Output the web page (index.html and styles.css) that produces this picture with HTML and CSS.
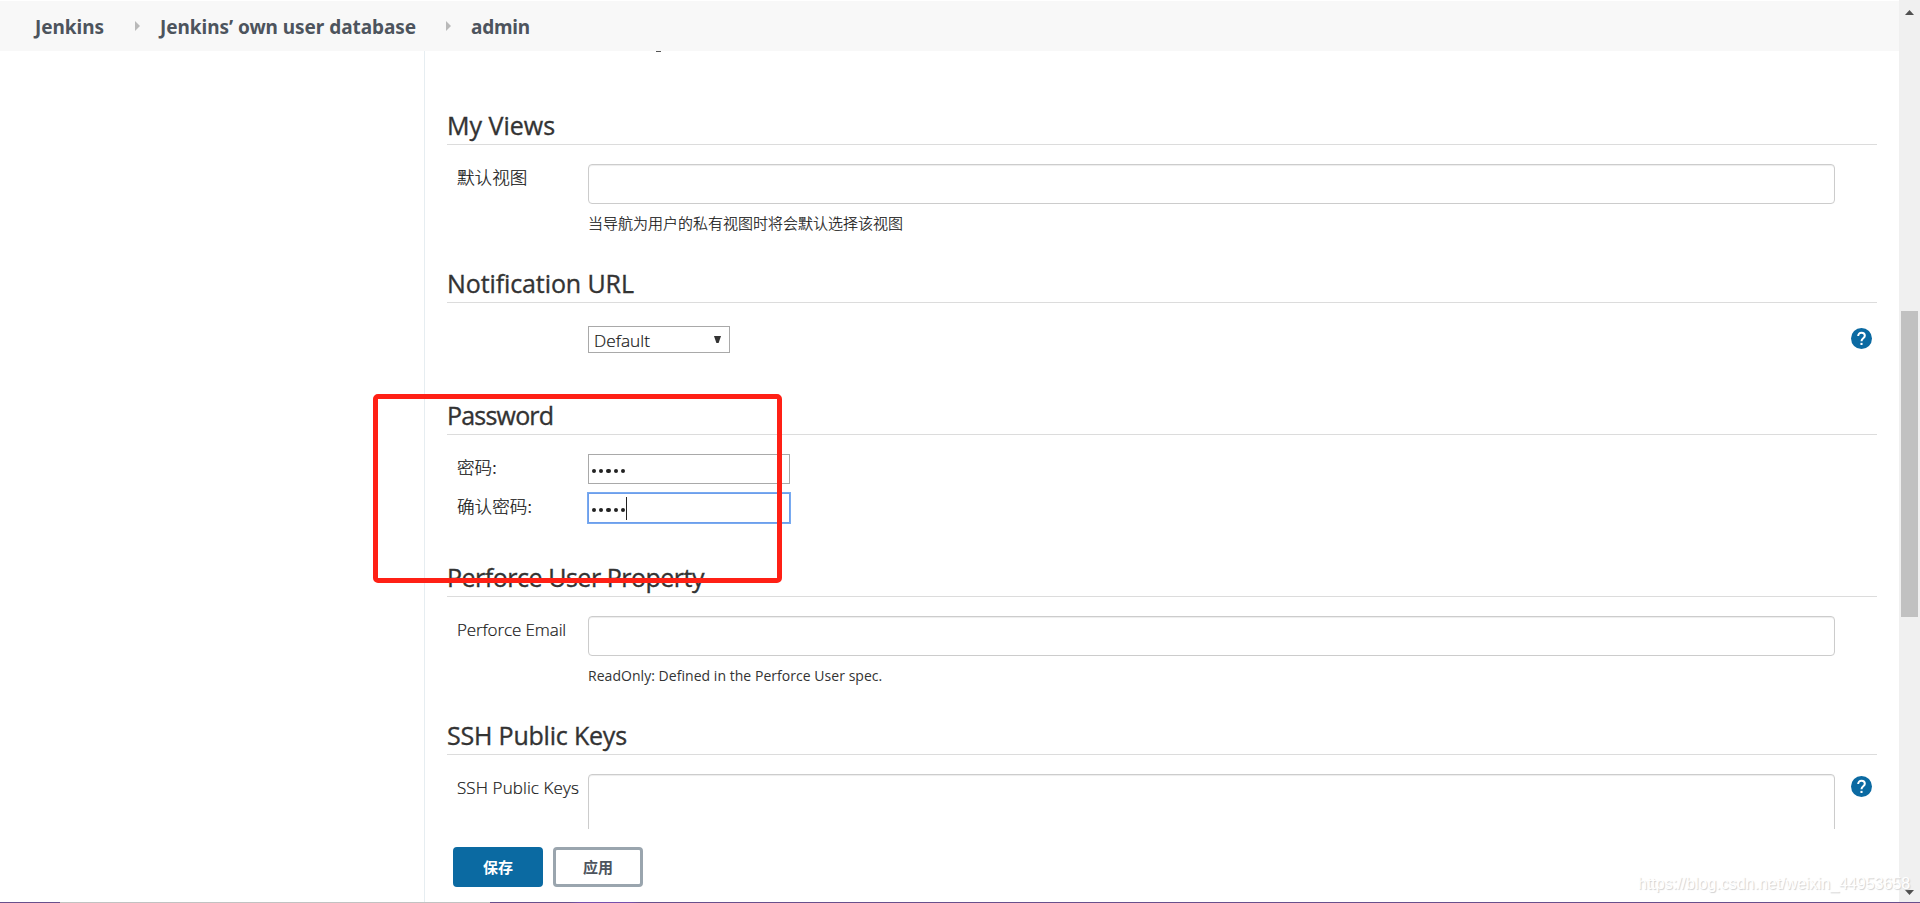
FILE: index.html
```html
<!DOCTYPE html>
<html lang="zh-CN">
<head>
<meta charset="utf-8">
<title>admin [Jenkins]</title>
<link rel="stylesheet" href="styles.css">
</head>
<body>
<div class="window">
  <div class="page">
    <nav class="crumbs">
      <span class="crumb c1">Jenkins</span><i class="sep s1"></i>
      <span class="crumb c2">Jenkins’ own user database</span><i class="sep s2"></i>
      <span class="crumb c3">admin</span>
    </nav>
    <div class="columns">
      <aside class="side"></aside>
      <main class="main">
        <div class="scroll">
          <div class="remnant"><i></i></div>
          <h2 class="title"><span class="t1">My Views</span></h2>
          <div class="body tall">
            <div class="row"><label class="label zh">默认视图</label>
              <div class="field"><div class="input"></div><p class="hint zh-hint">当导航为用户的私有视图时将会默认选择该视图</p></div></div>
          </div>
          <h2 class="title"><span class="t2">Notification URL</span></h2>
          <div class="body notify">
            <div class="row"><label class="label"></label>
              <div class="field"><div class="select"><span>Default</span><svg width="7" height="7" viewBox="0 0 7 7"><path d="M0 0h7L4.6 7H2.4z"/></svg></div></div>
              <svg class="help" viewBox="0 0 24 24"><circle cx="12" cy="12" r="12"/><path class="q" d="M8.2 9.2C8.2 6.9 9.8 5.4 12 5.4s3.8 1.4 3.8 3.5c0 2.8-3.8 2.9-3.8 6.1"/><path class="dot" d="M10.8 17h2.4v2.4h-2.4z"/></svg></div>
          </div>
          <h2 class="title"><span class="t3">Password</span></h2>
          <div class="body pass">
            <div class="row short"><label class="label zh">密码:</label><div class="pw"><b></b><b></b><b></b><b></b><b></b></div></div>
            <div class="row short"><label class="label zh">确认密码:</label><div class="pw focus"><b></b><b></b><b></b><b></b><b></b><i class="caret"></i></div></div>
          </div>
          <h2 class="title"><span class="t4">Perforce User Property</span></h2>
          <div class="body tall">
            <div class="row"><label class="label"><span class="l1">Perforce Email</span></label>
              <div class="field"><div class="input"></div><p class="hint en-hint">ReadOnly: Defined in the Perforce User spec.</p></div></div>
          </div>
          <h2 class="title"><span class="t5">SSH Public Keys</span></h2>
          <div class="body keys">
            <div class="row"><label class="label"><span class="l2">SSH Public Keys</span></label>
              <div class="field"><div class="input area"></div></div>
              <svg class="help low" viewBox="0 0 24 24"><circle cx="12" cy="12" r="12"/><path class="q" d="M8.2 9.2C8.2 6.9 9.8 5.4 12 5.4s3.8 1.4 3.8 3.5c0 2.8-3.8 2.9-3.8 6.1"/><path class="dot" d="M10.8 17h2.4v2.4h-2.4z"/></svg></div>
          </div>
        </div>
        <footer class="actions"><button class="btn primary">保存</button><button class="btn">应用</button></footer>
      </main>
    </div>
  </div>
  <div class="scrollbar">
    <svg class="arrow" width="9" height="5" viewBox="0 0 9 5"><path d="M4.5 0L9 5H0z"/></svg>
    <div class="thumb"></div>
    <svg class="arrow down" width="9" height="5" viewBox="0 0 9 5"><path d="M0 0h9L4.5 5z"/></svg>
  </div>
  <div class="edge"><i></i></div>
  <div class="mark"></div>
  <div class="watermark">https://blog.csdn.net/weixin_44953658</div>
</div>
</body>
</html>
```
FILE: styles.css
```css
* { box-sizing: border-box; }
body { margin: 0; background: #fff; color: #333; font-family: "Open Sans", "Noto Sans CJK SC", sans-serif; }
.window { position: relative; display: flex; width: 1920px; height: 903px; overflow: hidden; }
.page { width: 1899px; display: flex; flex-direction: column; padding-top: 1px; }
.crumbs { height: 50px; flex: none; display: flex; align-items: center; background: #f8f8f8; padding-left: 35px; color: #4d545d; font: 700 19px/26px "Noto Sans", sans-serif; white-space: nowrap; }
.crumb { flex: none; padding-top: 2px; }
.c1 { width: 100px; letter-spacing: -.05px; }
.c2 { width: 286px; letter-spacing: -.05px; margin-left: 20px; }
.c3 { margin-left: 20px; letter-spacing: -.2px; }
.sep { width: 5px; height: 10px; background: #b9b9b9; clip-path: polygon(0 0, 100% 50%, 0 100%); flex: none; }
.columns { display: flex; flex: 1; }
.side { width: 424px; }
.main { flex: 1; border-left: 1px solid #e6edf1; display: flex; flex-direction: column; }
.scroll { height: 778px; overflow: hidden; padding: 0 22px; }
.remnant { height: 54px; padding-left: 209px; }
.remnant i { display: block; width: 5px; height: 1px; background: #555; }
.title { margin: 0; height: 40px; border-bottom: 1px solid #dcdcdc; font-size: 25px; line-height: 40px; font-weight: 500; -webkit-text-stroke: .35px #333; white-space: nowrap; }
.t2 { letter-spacing: -.1px; }
.t3 { letter-spacing: -.8px; }
.t4 { letter-spacing: -.48px; }
.t5 { letter-spacing: -.2px; }
.body { padding-top: 19px; }
.tall { height: 118px; }
.notify { height: 92px; padding-top: 23px; }
.pass { height: 122px; }
.row { display: flex; }
.label { width: 141px; padding-left: 10px; flex: none; font-size: 17px; line-height: 28px; font-weight: 300; color: #111; -webkit-text-stroke: .2px #222; white-space: nowrap; }
.l1 { letter-spacing: -.1px; }
.l2 { letter-spacing: .1px; }
.zh { font-family: "Noto Sans CJK SC", sans-serif; font-size: 17.6px; line-height: 26px; }
.field { width: 1247px; }
.input { height: 40px; border: 1px solid #ccc; border-radius: 4px; box-shadow: inset 0 1px 1px rgba(0,0,0,.075); }
.area { height: 100px; }
.hint { margin: 9px 0 0; font-size: 14px; line-height: 22px; letter-spacing: .04px; white-space: nowrap; }
.zh-hint { font: 300 15px/20px "Noto Sans CJK SC", sans-serif; letter-spacing: 0; color: #111; -webkit-text-stroke: .2px #222; }
.select { width: 142px; height: 27px; border: 1px solid #a9a9a9; display: flex; align-items: center; justify-content: space-between; padding: 1px 8px 0 5px; font-size: 17.3px; font-weight: 300; color: #111; -webkit-text-stroke: .2px #222; }
.select svg { margin-top: -2px; fill: #333; -webkit-text-stroke: 0; }
.help { width: 21px; height: 21px; margin: 2px 0 0 16px; fill: #0b6aa2; }
.help .q { fill: none; stroke: #fff; stroke-width: 2.3; }
.help .dot { fill: #fff; }
.short { height: 39px; }
.pw { width: 202px; height: 30px; border: 1px solid #a9a9a9; display: flex; align-items: center; gap: 3px; padding: 4px 0 0 3px; }
.pw b { width: 4.2px; height: 4.2px; border-radius: 50%; background: #222; }
.focus { border-color: #6d9eeb; box-shadow: 0 0 0 1px #78aaf0; }
.caret { width: 1px; height: 23px; background: #222; margin: -3px 0 0 -2px; }
.actions { flex: 1; display: flex; gap: 10px; padding: 18px 0 0 28px; }
.btn { width: 90px; height: 40px; padding: 0 0 1px; border: 3px solid #9aa5ae; border-radius: 4px; background: #fff; color: #4d545d; font: 700 15px/20px "Noto Sans CJK SC", sans-serif; }
.primary { background: #0b6aa2; border-color: #0b6aa2; color: #fff; }
.scrollbar { width: 21px; background: #f0f0f0; display: flex; flex-direction: column; align-items: center; padding: 10px 0 8px; }
.arrow { fill: #505050; flex: none; }
.thumb { width: 17px; height: 306px; margin: 296px 2px auto; background: #c1c1c1; }
.edge { position: absolute; left: 0; right: 0; bottom: 0; height: 1px; background: linear-gradient(90deg, #68508c 0 570px, #7650ad 580px 630px, #68508c 640px); }
.edge i { display: block; width: 430px; height: 1px; margin-left: 60px; background: #c2c2c2; }
.mark { position: absolute; left: 373px; top: 394px; width: 409px; height: 189px; border: 5px solid #ff2015; border-radius: 5px; }
.watermark { position: absolute; left: 1638px; top: 873px; font: 16px/22px "Liberation Sans", sans-serif; color: #fff; text-shadow: 1px 1px 1px #d0d0d0; white-space: nowrap; }
```
